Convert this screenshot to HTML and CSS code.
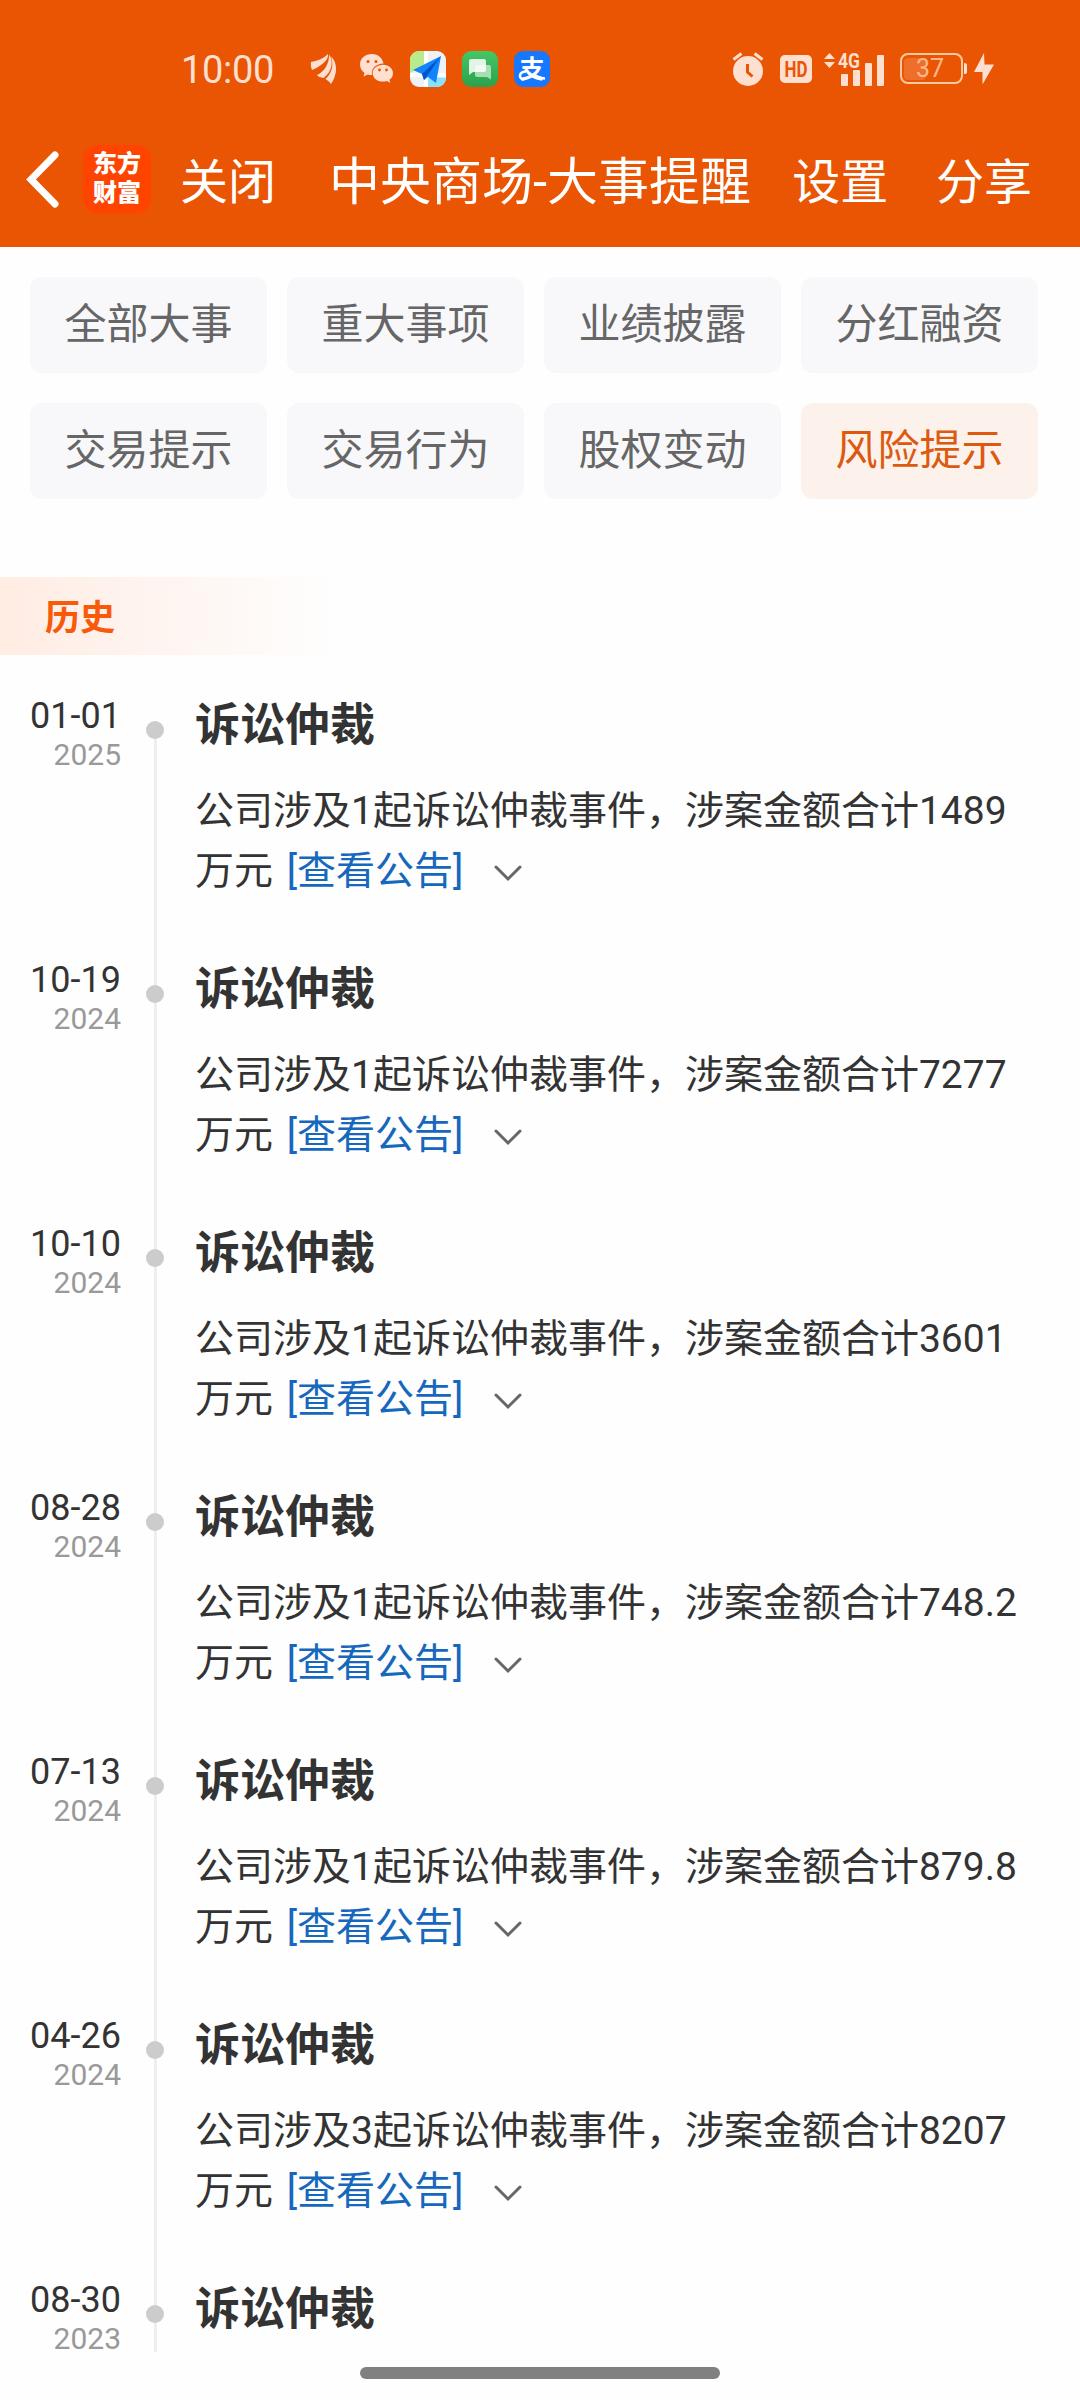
FILE: index.html
```html
<!DOCTYPE html>
<html lang="zh-CN">
<head>
    <meta charset="UTF-8">
    <meta name="viewport" content="width=device-width, initial-scale=1.0">
    <title>中央商场-大事提醒</title>
    <link rel="stylesheet" href="styles.css">
</head>
<body>

    <header class="header">
        <div class="status">
            <div class="status-left">
                <span class="time">10:00</span>
                <svg class="icon-stock" width="26" height="30" viewBox="0 0 26 30">
                    <path d="M0 8C6 7 12 5 17 0C18 6 10 12 1 16C0 13-.3 11 0 8Z"/>
                    <path d="M6 21C13 18 18.500 10 18 0.500C23 7 21 18 12.500 24C10 23.500 7 23 6 21Z"/>
                    <path d="M20 2.500C26 8 27.500 19 20 30C18.500 28 17 26.500 14.500 25C21 19 23 11 20 2.500Z"/>
                </svg>
                <svg class="icon-wechat" width="34" height="30" viewBox="0 0 34 30">
                    <path d="M12 0C5 0 0 4.600 0 10.500C0 14 1.800 17 4.500 19L3.500 22.500L7.800 20.500C9 20.900 10.500 21 12 21C11 14.500 16 9.500 23.500 9.500C22.500 4 18 0 12 0Z"/>
                    <path d="M23 10.800C17 10.800 12.700 14.600 12.700 19.200C12.700 23.900 17 27.600 23 27.600C24.300 27.600 25.500 27.400 26.600 27L30.300 28.800L29.400 25.800C31.700 24.200 33 21.900 33 19.200C33 14.600 28.800 10.800 23 10.800Z"/>
                    <g class="hole">
                        <circle cx="8" cy="7.500" r="1.500"/>
                        <circle cx="16" cy="7.500" r="1.500"/>
                        <circle cx="19.500" cy="16" r="1.400"/>
                        <circle cx="26.500" cy="16" r="1.400"/>
                    </g>
                </svg>
                <svg class="icon-map" width="36" height="36" viewBox="0 0 36 36">
                    <defs>
                        <clipPath id="mapClip"><rect width="36" height="36" rx="9"/></clipPath>
                    </defs>
                    <g clip-path="url(#mapClip)">
                        <rect width="36" height="36" fill="#eef2f6"/>
                        <path d="M0 0H14V15L0 22Z" fill="#b9ea8c"/>
                        <path d="M18 27L36 25V36H18Z" fill="#8be0fb"/>
                        <path d="M0 24L36 24.500M16 0V36" stroke="#fff" stroke-width="4"/>
                        <path d="M31 5L3 19L12 23L14 29L18 26L26 32Z" fill="#1284ff"/>
                        <path d="M31 5L12 23L14 29L17 25Z" fill="#0453c9"/>
                    </g>
                </svg>
                <svg class="icon-msg" width="36" height="36" viewBox="0 0 36 36">
                    <defs>
                        <linearGradient id="msgFill" x1="0" y1="0" x2="0" y2="1">
                            <stop offset="0" stop-color="#45c765"/>
                            <stop offset="1" stop-color="#2ba14b"/>
                        </linearGradient>
                    </defs>
                    <rect width="36" height="36" rx="9" fill="url(#msgFill)"/>
                    <path d="M15 14H27Q29 14 29 16V28.500L25 26H15Q13 26 13 24V16Q13 14 15 14Z" fill="#a5dfb2"/>
                    <path d="M9 8H22Q24 8 24 10V19Q24 21 22 21H11L7 24V10Q7 8 9 8Z" fill="#fff" fill-opacity=".85"/>
                </svg>
                <svg class="icon-pay" width="36" height="36" viewBox="0 0 36 36">
                    <rect width="36" height="36" rx="9" fill="#1677ff"/>
                    <text class="pay-text" x="18" y="27" text-anchor="middle">支</text>
                    <path d="M12 20.500C5 20.500 4 27.500 9.500 28.500M20 24C24 25.500 27 27.500 31 27.500" fill="none" stroke="#fff" stroke-width="2.500"/>
                </svg>
            </div>
            <div class="status-right">
                <svg width="32" height="34" viewBox="0 0 32 34">
                    <circle cx="16" cy="19" r="15"/>
                    <path class="line" d="M1.500 7.500L9.500 1.500M30.500 7.500L22.500 1.500" stroke-width="3"/>
                    <path class="cut" d="M15.500 12V20L20.500 24.500" stroke-width="3"/>
                </svg>
                <svg class="icon-hd" width="32" height="28" viewBox="0 0 32 28">
                    <rect width="32" height="28" rx="5"/>
                    <text class="hd-text" x="16" y="22" text-anchor="middle" textLength="23" lengthAdjust="spacingAndGlyphs">HD</text>
                </svg>
                <svg class="icon-signal" width="60" height="34" viewBox="0 0 60 34">
                    <path d="M5.500 1L11 7H0ZM5.500 16L11 10H0Z"/>
                    <text class="net-text" x="14" y="16" textLength="22" lengthAdjust="spacingAndGlyphs">4G</text>
                    <rect x="17" y="22" width="7" height="12" rx="1"/>
                    <rect x="29" y="18" width="7" height="16" rx="1"/>
                    <rect x="41" y="11" width="7" height="23" rx="1"/>
                    <rect x="53" y="3" width="7" height="31" rx="1"/>
                </svg>
                <svg class="icon-battery" width="68" height="32" viewBox="0 0 68 32">
                    <rect class="level" x="4" y="5" width="22" height="22" rx="4"/>
                    <rect class="shell" x="1" y="1" width="61" height="29" rx="7"/>
                    <path d="M64 10Q67 10 67 12V19Q67 21 64 21Z"/>
                    <text class="battery-text" x="30" y="24" text-anchor="middle">37</text>
                </svg>
                <svg class="icon-bolt" width="20" height="32" viewBox="0 0 20 32">
                    <path d="M10 0L0 19H8.500V31.500L20 11.500H10.500Z"/>
                </svg>
            </div>
        </div>
        <nav class="navbar">
            <svg class="back" width="34" height="60" viewBox="0 0 34 60">
                <path d="M29 4L5 28.500L29 53"/>
            </svg>
            <div class="logo"><span>东方</span><span>财富</span></div>
            <a class="nav-btn">关闭</a>
            <h1 class="nav-title">中央商场-大事提醒</h1>
            <a class="nav-btn">设置</a>
            <a class="nav-btn share">分享</a>
        </nav>
    </header>

    <main class="page">
        <div class="tabs">
            <div class="tab">全部大事</div>
            <div class="tab">重大事项</div>
            <div class="tab">业绩披露</div>
            <div class="tab">分红融资</div>
            <div class="tab">交易提示</div>
            <div class="tab">交易行为</div>
            <div class="tab">股权变动</div>
            <div class="tab active">风险提示</div>
        </div>

        <h2 class="section">历史</h2>

        <div class="timeline">
            <div class="item">
                <div class="date">01-01<span class="year">2025</span></div>
                <div class="axis"></div>
                <div class="content">
                    <h3>诉讼仲裁</h3>
                    <p>公司涉及1起诉讼仲裁事件，涉案金额合计1489万元 <a class="link">[查看公告]</a><svg class="arrow" viewBox="0 0 28 16"><path d="M2 2L14 14L26 2"/></svg></p>
                </div>
            </div>
            <div class="item">
                <div class="date">10-19<span class="year">2024</span></div>
                <div class="axis"></div>
                <div class="content">
                    <h3>诉讼仲裁</h3>
                    <p>公司涉及1起诉讼仲裁事件，涉案金额合计7277万元 <a class="link">[查看公告]</a><svg class="arrow" viewBox="0 0 28 16"><path d="M2 2L14 14L26 2"/></svg></p>
                </div>
            </div>
            <div class="item">
                <div class="date">10-10<span class="year">2024</span></div>
                <div class="axis"></div>
                <div class="content">
                    <h3>诉讼仲裁</h3>
                    <p>公司涉及1起诉讼仲裁事件，涉案金额合计3601万元 <a class="link">[查看公告]</a><svg class="arrow" viewBox="0 0 28 16"><path d="M2 2L14 14L26 2"/></svg></p>
                </div>
            </div>
            <div class="item">
                <div class="date">08-28<span class="year">2024</span></div>
                <div class="axis"></div>
                <div class="content">
                    <h3>诉讼仲裁</h3>
                    <p>公司涉及1起诉讼仲裁事件，涉案金额合计748.2万元 <a class="link">[查看公告]</a><svg class="arrow" viewBox="0 0 28 16"><path d="M2 2L14 14L26 2"/></svg></p>
                </div>
            </div>
            <div class="item">
                <div class="date">07-13<span class="year">2024</span></div>
                <div class="axis"></div>
                <div class="content">
                    <h3>诉讼仲裁</h3>
                    <p>公司涉及1起诉讼仲裁事件，涉案金额合计879.8万元 <a class="link">[查看公告]</a><svg class="arrow" viewBox="0 0 28 16"><path d="M2 2L14 14L26 2"/></svg></p>
                </div>
            </div>
            <div class="item">
                <div class="date">04-26<span class="year">2024</span></div>
                <div class="axis"></div>
                <div class="content">
                    <h3>诉讼仲裁</h3>
                    <p>公司涉及3起诉讼仲裁事件，涉案金额合计8207万元 <a class="link">[查看公告]</a><svg class="arrow" viewBox="0 0 28 16"><path d="M2 2L14 14L26 2"/></svg></p>
                </div>
            </div>
            <div class="item">
                <div class="date">08-30<span class="year">2023</span></div>
                <div class="axis"></div>
                <div class="content">
                    <h3>诉讼仲裁</h3>
                </div>
            </div>
        </div>
    </main>

    <footer class="home">
        <div class="home-bar"></div>
    </footer>

</body>
</html>
```
FILE: styles.css
```css
* {
    box-sizing: border-box;
    margin: 0;
    padding: 0;
}
body {
    width: 1080px;
    height: 2400px;
    display: flex;
    flex-direction: column;
    overflow: hidden;
    background: #fefefe;
    color: #333;
    font-family: Roboto, "Noto Sans CJK SC", sans-serif;
}
svg {
    overflow: visible;
}

/* Header */
.header {
    height: 247px;
    flex: none;
    background: #ea5504;
    color: #fff;
}
.status {
    height: 138px;
    display: flex;
    justify-content: space-between;
    padding: 0 86px 0 181px;
    color: #ffdfd0;
    fill: #ffdfd0;
}
.status-left,
.status-right {
    display: flex;
    align-items: center;
    height: 138px;
}
.time {
    width: 130px;
    padding-top: 2px;
    font-size: 38px;
    line-height: 44px;
    letter-spacing: -0.3px;
}
.icon-wechat {
    margin-left: 23px;
}
.icon-map,
.icon-msg,
.icon-pay {
    margin-left: 16px;
}
.pay-text {
    fill: #fff;
    font-size: 25px;
    font-weight: bold;
}
.hole {
    fill: #ea5504;
}
.line {
    stroke: #ffdfd0;
}
.cut {
    fill: none;
    stroke: #ea5504;
}
.icon-hd {
    margin-left: 16px;
}
.hd-text {
    fill: #ea5504;
    font-size: 22px;
    font-weight: bold;
}
.icon-signal {
    margin-left: 12px;
}
.net-text {
    font-size: 21px;
    font-weight: bold;
}
.icon-battery {
    margin-left: 16px;
}
.level {
    fill: #ef6f2a;
}
.shell {
    fill: none;
    stroke: #ffc9a0;
    stroke-width: 2;
}
.battery-text {
    fill: #ffb78c;
    font-size: 25px;
}
.icon-bolt {
    margin-left: 6px;
}

.navbar {
    height: 86px;
    display: flex;
    align-items: center;
    padding: 0 48px 0 26px;
}
.back {
    fill: none;
    stroke: #fff;
    stroke-width: 7;
    stroke-linecap: round;
}
.logo {
    width: 68px;
    height: 68px;
    margin-left: 23px;
    margin-bottom: 4px;
    padding-top: 5px;
    border-radius: 14px;
    background: #ff4400;
    font-size: 24px;
    font-weight: 900;
    line-height: 29px;
    text-align: center;
}
.logo span {
    display: block;
}
.nav-btn {
    margin-left: 29px;
    padding-top: 4px;
    font-size: 48px;
    line-height: 68px;
}
.nav-title {
    margin-left: 53px;
    margin-right: 12px;
    padding-top: 4px;
    font-size: 51px;
    font-weight: normal;
    line-height: 68px;
    white-space: nowrap;
}
.share {
    margin-left: auto;
}

/* Content */
.page {
    height: 2105px;
    flex: none;
    overflow: hidden;
    padding-top: 30px;
}
.tabs {
    display: grid;
    grid-template-columns: repeat(4, 237px);
    gap: 30px 20px;
    padding-left: 30px;
}
.tab {
    height: 96px;
    border-radius: 12px;
    background: #f8f8fb;
    color: #666;
    font-size: 42px;
    line-height: 95px;
    text-align: center;
}
.tab.active {
    background: #fdf1eb;
    color: #dc5a10;
}
.section {
    width: 335px;
    height: 78px;
    margin-top: 78px;
    padding-left: 45px;
    background: linear-gradient(to right, #ffece3, #fefefe);
    color: #f95a0a;
    font-size: 35px;
    line-height: 84px;
}

/* Timeline */
.timeline {
    padding: 39px 42px 0 30px;
}
.item {
    height: 264px;
    display: flex;
}
.date {
    width: 91px;
    padding-top: 1px;
    font-size: 36px;
    line-height: 42px;
    white-space: nowrap;
}
.year {
    display: block;
    color: #999;
    font-size: 30px;
    line-height: 36px;
    text-align: right;
}
.axis {
    width: 18px;
    margin: 0 31px 0 25px;
    background: linear-gradient(#eee, #eee) 8px 0 / 3px 100% no-repeat;
}
.axis::before {
    content: "";
    display: block;
    width: 18px;
    height: 18px;
    margin-top: 27px;
    border-radius: 50%;
    background: #ccc;
}
/* the line starts at the first dot */
.item:first-child .axis {
    background-position: 8px 36px;
}
.content {
    flex: 1;
}
.content h3 {
    margin-bottom: 23px;
    font-size: 45px;
    line-height: 64px;
}
.content p {
    font-size: 39px;
    line-height: 60px;
}
.link {
    margin-left: 4px;
    color: #1668bd;
}
.arrow {
    width: 28px;
    height: 16px;
    margin-left: 31px;
    margin-bottom: 3px;
    fill: none;
    stroke: #666;
    stroke-width: 3;
    stroke-linecap: round;
}

/* Gesture bar */
.home {
    flex: 1;
    padding-top: 15px;
}
.home-bar {
    width: 360px;
    height: 12px;
    margin: 0 auto;
    border-radius: 6px;
    background: #808080;
}
```
